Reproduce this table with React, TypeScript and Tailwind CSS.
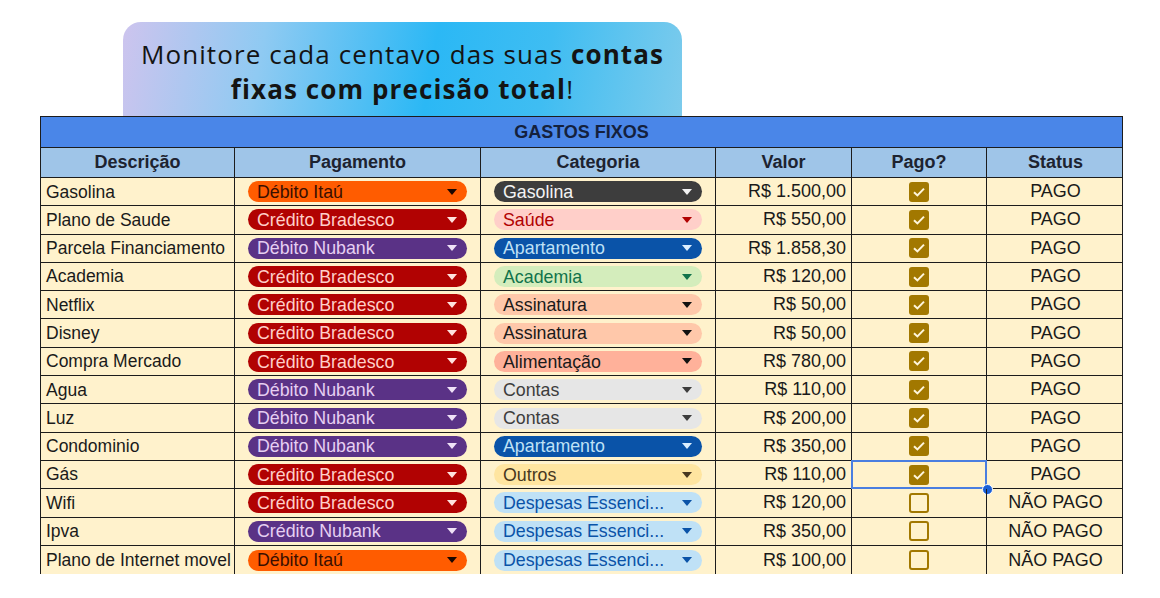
import React from "react";

type Pill = { bg: string; fg: string; arrow: string };

const PAY: Record<string, Pill> = {
  "Débito Itaú": { bg: "bg-[#ff5c00]", fg: "text-[#3a0f00]", arrow: "#1a0600" },
  "Crédito Bradesco": { bg: "bg-[#b10202]", fg: "text-[#ffcfc9]", arrow: "#ffe3df" },
  "Débito Nubank": { bg: "bg-[#5a3286]", fg: "text-[#e6cff2]", arrow: "#efe2f7" },
  "Crédito Nubank": { bg: "bg-[#5a3286]", fg: "text-[#e6cff2]", arrow: "#efe2f7" },
};

const CAT: Record<string, Pill> = {
  Gasolina: { bg: "bg-[#3d3d3d]", fg: "text-[#f3f3f3]", arrow: "#f3f3f3" },
  "Saúde": { bg: "bg-[#ffcfc9]", fg: "text-[#b10202]", arrow: "#b10202" },
  Apartamento: { bg: "bg-[#0a53a8]", fg: "text-[#bfe1f6]", arrow: "#dcefff" },
  Academia: { bg: "bg-[#d4edbc]", fg: "text-[#11734b]", arrow: "#11734b" },
  Assinatura: { bg: "bg-[#ffc8aa]", fg: "text-[#1a1a1a]", arrow: "#111" },
  "Alimentação": { bg: "bg-[#ffb19a]", fg: "text-[#1a1a1a]", arrow: "#111" },
  Contas: { bg: "bg-[#e6e6e6]", fg: "text-[#3d3d3d]", arrow: "#3d3d3d" },
  Outros: { bg: "bg-[#ffe5a0]", fg: "text-[#473821]", arrow: "#473821" },
  "Despesas Essenci...": { bg: "bg-[#bfe1f6]", fg: "text-[#0a53a8]", arrow: "#0a53a8" },
};

const rows: [string, string, string, string, boolean][] = [
  ["Gasolina", "Débito Itaú", "Gasolina", "R$ 1.500,00", true],
  ["Plano de Saude", "Crédito Bradesco", "Saúde", "R$ 550,00", true],
  ["Parcela Financiamento", "Débito Nubank", "Apartamento", "R$ 1.858,30", true],
  ["Academia", "Crédito Bradesco", "Academia", "R$ 120,00", true],
  ["Netflix", "Crédito Bradesco", "Assinatura", "R$ 50,00", true],
  ["Disney", "Crédito Bradesco", "Assinatura", "R$ 50,00", true],
  ["Compra Mercado", "Crédito Bradesco", "Alimentação", "R$ 780,00", true],
  ["Agua", "Débito Nubank", "Contas", "R$ 110,00", true],
  ["Luz", "Débito Nubank", "Contas", "R$ 200,00", true],
  ["Condominio", "Débito Nubank", "Apartamento", "R$ 350,00", true],
  ["Gás", "Crédito Bradesco", "Outros", "R$ 110,00", true],
  ["Wifi", "Crédito Bradesco", "Despesas Essenci...", "R$ 120,00", false],
  ["Ipva", "Crédito Nubank", "Despesas Essenci...", "R$ 350,00", false],
  ["Plano de Internet movel", "Débito Itaú", "Despesas Essenci...", "R$ 100,00", false],
];

const COLS = "grid grid-cols-[194px_246px_235px_136px_135px_137px]";

function Chip({ label, p }: { label: string; p: Pill }) {
  return (
    <div
      className={`mx-[13px] h-[21px] rounded-full ${p.bg} ${p.fg} flex items-center justify-between pl-[9px] pr-[10px] text-[17.8px] leading-none`}
    >
      <span className="whitespace-nowrap pt-[2px]">{label}</span>
      <svg width="10" height="6" viewBox="0 0 10 6">
        <path d="M0 0 H10 L5 6 Z" fill={p.arrow} />
      </svg>
    </div>
  );
}

function Check({ on }: { on: boolean }) {
  if (on)
    return (
      <div className="w-[20px] h-[20px] rounded-[3px] bg-[#a27800] flex items-center justify-center">
        <svg width="14" height="12" viewBox="0 0 14 12">
          <path d="M2 6.2 L5.4 9.4 L12 2.6" stroke="#fff6dc" strokeWidth="2" fill="none" />
        </svg>
      </div>
    );
  return <div className="w-[20px] h-[20px] rounded-[3px] border-[2.5px] border-[#a27800]" />;
}

export default function App() {
  return (
    <div
      className="w-[1160px] h-[598px] bg-white overflow-hidden"
      style={{ fontFamily: '"Liberation Sans", Arial, sans-serif' }}
    >
      <div className="ml-[123px] mt-[22px] w-[559px] h-[94px] rounded-t-[18px] bg-[linear-gradient(100deg,#cdc4ee_0%,#8fcaf2_25%,#2bb8f5_55%,#3fbdf2_75%,#7dcbec_100%)] flex flex-col items-center pt-[15px]">
        <div
          className="text-[26px] leading-[35px] tracking-[1.1px] text-[#141414] text-center"
          style={{ fontFamily: '"Open Sans", sans-serif' }}
        >
          <div>
            Monitore cada centavo das suas <b className="font-bold">contas</b>
          </div>
          <div>
            <b className="font-bold">fixas com precisão total</b>!
          </div>
        </div>
      </div>
      <div className="ml-[40px] w-[1083px] border-l border-r border-t border-[#1c1c1c]">
        <div className="h-[31px] bg-[#4a86e8] border-b border-[#1c1c1c] flex items-center justify-center text-[18px] font-bold text-[#14213d]">
          GASTOS FIXOS
        </div>
        <div className={`${COLS} h-[30px] bg-[#9fc5e8] border-b border-[#1c1c1c] text-[18px] font-bold text-[#1d2330]`}>
          {["Descrição", "Pagamento", "Categoria", "Valor", "Pago?", "Status"].map((h, i) => (
            <div
              key={h}
              className={`flex items-center justify-center ${i < 5 ? "border-r border-[#1c1c1c]" : ""}`}
            >
              {h}
            </div>
          ))}
        </div>
        {rows.map(([d, pay, cat, val, paid], idx) => (
          <div
            key={idx}
            className={`${COLS} h-[28.3px] bg-[#fff2cc] text-[18px] text-[#1a1a1a] ${idx < rows.length - 1 ? "border-b border-[#1c1c1c]" : ""}`}
          >
            <div className="flex items-center pl-[5px] border-r border-[#1c1c1c] whitespace-nowrap overflow-hidden text-[17.5px]">
              {d}
            </div>
            <div className="flex items-center border-r border-[#1c1c1c]">
              <div className="w-full">
                <Chip label={pay} p={PAY[pay]} />
              </div>
            </div>
            <div className="flex items-center border-r border-[#1c1c1c]">
              <div className="w-full">
                <Chip label={cat} p={CAT[cat]} />
              </div>
            </div>
            <div className="flex items-center justify-end pr-[5px] border-r border-[#1c1c1c]">{val}</div>
            <div className="relative flex items-center justify-center border-r border-[#1c1c1c]">
              <Check on={paid} />
              {idx === 10 && (
                <>
                  <div className="absolute inset-[-1px] border-2 border-[#4a7ee0]" />
                  <div className="absolute right-[-7px] bottom-[-7px] w-[11px] h-[11px] rounded-full bg-[#1a5fd6] border border-white" />
                </>
              )}
            </div>
            <div className="flex items-center justify-center">{paid ? "PAGO" : "NÃO PAGO"}</div>
          </div>
        ))}
      </div>
    </div>
  );
}
